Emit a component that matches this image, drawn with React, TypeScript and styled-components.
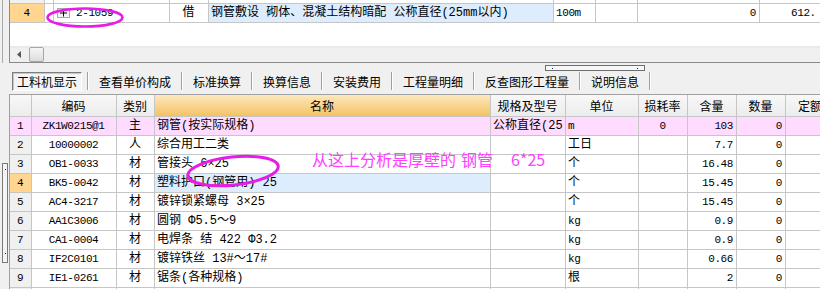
import React from 'react';
import styled, { createGlobalStyle } from 'styled-components';

const GlobalStyle = createGlobalStyle`
  html, body { margin: 0; padding: 0; background: #f0f0f0; overflow: hidden; }
  body { font-family: "Liberation Mono", "Noto Sans CJK SC", monospace; color: #000; }
`;

const Page = styled.div`
  position: relative;
  width: 820px;
  height: 289px;
  overflow: hidden;
  background: #f0f0f0;
  display: flex;
  flex-direction: column;
`;

/* ---------- upper pane ---------- */
const TopOuter = styled.div`
  box-sizing: border-box;
  height: 63px;
  margin-left: 2px;
  padding-left: 6px;
  border-left: 1px solid #a9a9a9;
  display: flex;
  flex-shrink: 0;
`;

const TopFrame = styled.div`
  flex: 1;
  min-width: 0;
  border-left: 1px solid #8a8a8a;
  border-bottom: 1px solid #8a8a8a;
  background: #fff;
  display: flex;
  flex-direction: column;
  overflow: hidden;
`;

const TopBody = styled.div`
  flex: 1;
  overflow: hidden;
`;

const TopRows = styled.div`
  margin-top: -15px;
`;

const Row = styled.div<{ $cols: string; $h: number; $drop?: number }>`
  display: grid;
  grid-template-columns: ${p => p.$cols};
  height: ${p => p.$h}px;
  & > * {
    padding-top: ${p => p.$drop ?? 0}px;
  }
`;

type Align = 'left' | 'center' | 'right';

const Cell = styled.div<{ $align?: Align; $bg?: string; $mono?: boolean; $gap?: number; $indent?: number }>`
  box-sizing: border-box;
  min-width: 0;
  border-right: 1px solid #c6c6c6;
  border-bottom: 1px solid #c6c6c6;
  background: ${p => p.$bg ?? '#fff'};
  display: flex;
  align-items: center;
  gap: ${p => p.$gap ?? 0}px;
  justify-content: ${p => (p.$align === 'center' ? 'center' : p.$align === 'right' ? 'flex-end' : 'flex-start')};
  padding: 0 3px 0 ${p => p.$indent ?? 2}px;
  overflow: hidden;
  white-space: nowrap;
  font-size: ${p => (p.$mono ? '11px' : '12px')};
  letter-spacing: ${p => (p.$mono ? '-0.4px' : '0')};
  line-height: 14px;
`;

const HeadCell = styled(Cell)<{ $hot?: boolean }>`
  background: ${p => (p.$hot ? 'linear-gradient(#fde8bd, #f4c263)' : 'linear-gradient(#f8f8f8, #ececec)')};
  font-family: "Noto Sans CJK SC", sans-serif;
  font-size: 12px;
`;

const HScroll = styled.div`
  height: 16px;
  flex-shrink: 0;
  background: linear-gradient(#e6e6e6, #f0f0f0 3px, #efefef);
  display: flex;
  align-items: center;
  padding-left: 7px;
  gap: 8px;
`;

const Thumb = styled.div`
  box-sizing: border-box;
  width: 15px;
  height: 15px;
  border: 1px solid #a6a6a6;
  border-radius: 2px;
  background: linear-gradient(#f6f6f6, #dcdcdc);
`;

const PlusIcon = () => (
  <svg width="13" height="10" viewBox="0 0 13 10">
    <rect x="0.5" y="0.5" width="12" height="9" fill="#f4f4f4" stroke="#a8a8a8" />
    <line x1="3" y1="5" x2="10" y2="5" stroke="#000" />
    <line x1="6.5" y1="1.5" x2="6.5" y2="8.5" stroke="#000" />
  </svg>
);

const LeftArrow = () => (
  <svg width="4" height="7" viewBox="0 0 4 7">
    <polygon points="4,0 0,3.5 4,7" fill="#555" />
  </svg>
);

/* ---------- splitter ---------- */
const SplitRow = styled.div`
  height: 8px;
  flex-shrink: 0;
  padding: 2px 0 0 545px;
  box-sizing: border-box;
`;

const HHandle = styled.div`
  box-sizing: border-box;
  width: 100px;
  height: 6px;
  border: 1px solid #6e6e6e;
  background: #f7f7f7;
  display: flex;
  justify-content: space-between;
  align-items: center;
  padding: 0 6px;
`;

const Dot = styled.span`
  width: 1px;
  height: 1px;
  background: #1a1a8c;
`;

const VHandle = styled.div`
  position: absolute;
  left: 2px;
  top: 163px;
  box-sizing: border-box;
  width: 6px;
  height: 100px;
  border: 1px solid #7a7a7a;
  background: #f4f4f4;
  display: flex;
  flex-direction: column;
  justify-content: space-between;
  align-items: center;
  padding: 5px 0 8px;
`;

/* ---------- tabs ---------- */
const TabBar = styled.div`
  height: 23px;
  flex-shrink: 0;
  box-sizing: border-box;
  padding: 1px 0 0 12px;
  display: flex;
  align-items: flex-start;
  font-family: "Noto Sans CJK SC", sans-serif;
  font-size: 12px;
`;

const Tab = styled.div<{ $active?: boolean }>`
  box-sizing: border-box;
  height: 19px;
  display: flex;
  align-items: center;
  white-space: nowrap;
  padding: ${p => (p.$active ? '0 4px' : '0 10px')};
  margin-right: ${p => (p.$active ? '5px' : '0')};
  border: ${p => (p.$active ? '1px solid' : 'none')};
  border-color: #7e7e7e #ffffff #ffffff #7e7e7e;
  background: ${p => (p.$active ? '#f4f4f4' : 'transparent')};
  box-shadow: ${p => (p.$active ? 'inset 1px 1px 0 #c8c8c8' : 'none')};
`;

const TabSep = styled.div`
  width: 0;
  height: 18px;
  border-left: 1px solid #a0a0a0;
  border-right: 1px solid #ffffff;
`;

/* ---------- lower grid ---------- */
const Grid = styled.div`
  margin-left: 9px;
  border-left: 1px solid #a0a0a0;
  border-top: 1px solid #a0a0a0;
  background: #fff;
  flex: 1;
  overflow: hidden;
`;

/* ---------- annotation overlay ---------- */
const Note = styled.div`
  position: absolute;
  left: 312px;
  top: 149px;
  font-family: "Noto Sans CJK SC", sans-serif;
  font-size: 16px;
  line-height: 20px;
  color: #ff40ff;
  white-space: nowrap;
  pointer-events: none;
`;

const NoteGap = styled.span<{ $w: number }>`
  margin-left: ${p => p.$w}px;
`;

const Marks = styled.svg`
  position: absolute;
  left: 0;
  top: 0;
  pointer-events: none;
`;

const TOP_COLS = '35px 9px 116px 39px 345px 42px 42px 122px 90px';
const GRID_COLS = '22px 85px 38px 336px 75px 73px 49px 49px 49px 60px';

const PINK = '#ffdcff';
const ORANGE = '#ffd590';
const BLUE = '#ddedfd';
const GRAY = '#f0f0f0';

type Item = {
  code: string;
  kind: string;
  name: string;
  spec?: string;
  unit: string;
  loss?: string;
  qty: string;
  num: string;
};

const items: Item[] = [
  { code: 'ZK1W0215@1', kind: '主', name: '钢管(按实际规格)', spec: '公称直径(25', unit: 'm', loss: '0', qty: '103', num: '0' },
  { code: '10000002', kind: '人', name: '综合用工二类', unit: '工日', qty: '7.7', num: '0' },
  { code: 'OB1-0033', kind: '材', name: '管接头 6×25', unit: '个', qty: '16.48', num: '0' },
  { code: 'BK5-0042', kind: '材', name: '塑料护口(钢管用) 25', unit: '个', qty: '15.45', num: '0' },
  { code: 'AC4-3217', kind: '材', name: '镀锌锁紧螺母 3×25', unit: '个', qty: '15.45', num: '0' },
  { code: 'AA1C3006', kind: '材', name: '圆钢 Φ5.5～9', unit: 'kg', qty: '0.9', num: '0' },
  { code: 'CA1-0004', kind: '材', name: '电焊条 结 422 Φ3.2', unit: 'kg', qty: '0.9', num: '0' },
  { code: 'IF2C0101', kind: '材', name: '镀锌铁丝 13#～17#', unit: 'kg', qty: '0.66', num: '0' },
  { code: 'IE1-0261', kind: '材', name: '锯条(各种规格)', unit: '根', qty: '2', num: '0' },
  { code: '', kind: '', name: '', unit: '', qty: '', num: '' },
];

const tabs = ['工料机显示', '查看单价构成', '标准换算', '换算信息', '安装费用', '工程量明细', '反查图形工程量', '说明信息'];

export default function App() {
  return (
    <>
      <GlobalStyle />
      <Page>
        <TopOuter>
          <TopFrame>
            <TopBody>
              <TopRows>
                <Row $cols={TOP_COLS} $h={19} $drop={3}>
                  <Cell $bg={GRAY} />
                  <Cell />
                  <Cell $gap={6} $indent={3}>
                    <PlusIcon />
                  </Cell>
                  <Cell />
                  <Cell />
                  <Cell />
                  <Cell />
                  <Cell />
                  <Cell />
                </Row>
                <Row $cols={TOP_COLS} $h={19} $drop={3}>
                  <Cell $bg={ORANGE} $align="center" $mono>4</Cell>
                  <Cell />
                  <Cell $gap={6} $mono $indent={3}>
                    <PlusIcon />
                    <span>2-1059</span>
                  </Cell>
                  <Cell $align="center">借</Cell>
                  <Cell $bg={BLUE}>钢管敷设 砌体、混凝土结构暗配 公称直径(25mm以内)</Cell>
                  <Cell $mono>100m</Cell>
                  <Cell />
                  <Cell $align="right" $mono>0</Cell>
                  <Cell $mono $indent={31}>612.</Cell>
                </Row>
              </TopRows>
            </TopBody>
            <HScroll>
              <LeftArrow />
              <Thumb />
            </HScroll>
          </TopFrame>
        </TopOuter>

        <SplitRow>
          <HHandle>
            <Dot />
            <Dot />
          </HHandle>
        </SplitRow>

        <TabBar>
          {tabs.map((t, i) => (
            <React.Fragment key={t}>
              <Tab $active={i === 0}>{t}</Tab>
              <TabSep />
            </React.Fragment>
          ))}
        </TabBar>

        <Grid>
          <Row $cols={GRID_COLS} $h={22}>
            <HeadCell $align="center" />
            <HeadCell $align="center">编码</HeadCell>
            <HeadCell $align="center">类别</HeadCell>
            <HeadCell $align="center" $hot>名称</HeadCell>
            <HeadCell $align="center">规格及型号</HeadCell>
            <HeadCell $align="center">单位</HeadCell>
            <HeadCell $align="center">损耗率</HeadCell>
            <HeadCell $align="center">含量</HeadCell>
            <HeadCell $align="center">数量</HeadCell>
            <HeadCell $indent={12}>定额</HeadCell>
          </Row>
          {items.map((it, i) => {
            const rowBg = i === 0 ? PINK : undefined;
            const numBg = i === 0 ? PINK : i === 3 ? ORANGE : GRAY;
            return (
              <Row key={i} $cols={GRID_COLS} $h={19} $drop={1}>
                <Cell $bg={numBg} $align="center" $mono>{i < 9 ? i + 1 : ''}</Cell>
                <Cell $bg={rowBg} $align="center" $mono>{it.code}</Cell>
                <Cell $bg={rowBg} $align="center">{it.kind}</Cell>
                <Cell $bg={i === 3 ? BLUE : rowBg}>{it.name}</Cell>
                <Cell $bg={rowBg}>{it.spec ?? ''}</Cell>
                <Cell $bg={rowBg} $mono={/^[a-z]+$/.test(it.unit)}>{it.unit}</Cell>
                <Cell $bg={rowBg} $align="center" $mono>{it.loss ?? ''}</Cell>
                <Cell $bg={rowBg} $align="right" $mono>{it.qty}</Cell>
                <Cell $bg={rowBg} $align="right" $mono>{it.num}</Cell>
                <Cell $bg={rowBg} />
              </Row>
            );
          })}
        </Grid>

        <VHandle>
          <Dot />
          <Dot />
        </VHandle>

        <Note>
          从这上分析是厚壁的<NoteGap $w={5}>钢管</NoteGap>
          <NoteGap $w={18}>6*25</NoteGap>
        </Note>

        <Marks width="820" height="289" viewBox="0 0 820 289">
          <ellipse cx="85" cy="17.5" rx="37.5" ry="9" fill="none" stroke="#e81ce8" strokeWidth="2.6" />
          <ellipse
            cx="233"
            cy="171"
            rx="45.5"
            ry="14"
            fill="none"
            stroke="#e81ce8"
            strokeWidth="3"
            transform="rotate(-6 233 171)"
          />
        </Marks>
      </Page>
    </>
  );
}
